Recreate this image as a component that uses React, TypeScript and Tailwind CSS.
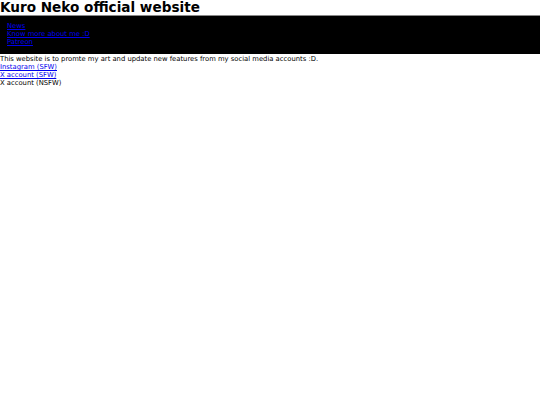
export default function App() {
  return (
    <div className="min-h-[405px] bg-white text-black font-['DejaVu_Sans',sans-serif]">
      <h1 className="text-[13.6px] font-bold leading-[15px] border-b border-[#888]">Kuro Neko official website</h1>
      <nav className="bg-black h-[38px] pt-[6px] pl-[7px]">
        <ul className="text-[6.8px] leading-[8px]">
          <li><a href="#" className="text-[#0000ee] underline">News</a></li>
          <li><a href="#" className="text-[#0000ee] underline">Know more about me :D</a></li>
          <li><a href="#" className="text-[#0000ee] underline">Patreon</a></li>
        </ul>
      </nav>
      <div className="text-[6.8px] leading-[8px] pt-[1px]">
        <p>This website is to promte my art and update new features from my social media accounts :D.</p>
        <p><a href="#" className="text-[#0000ee] underline">Instagram (SFW)</a></p>
        <p><a href="#" className="text-[#0000ee] underline">X account (SFW)</a></p>
        <p>X account (NSFW)</p>
      </div>
    </div>
  )
}
